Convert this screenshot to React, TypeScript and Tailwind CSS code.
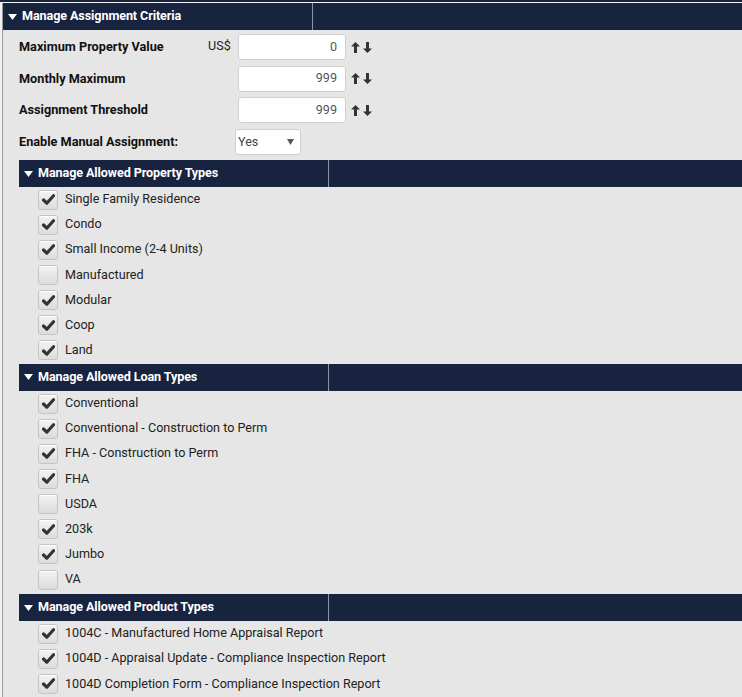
import React from "react";

const NAVY = "bg-[#18233f]";

function Tri() {
  return (
    <svg width="9" height="6" viewBox="0 0 9 6" className="mr-[5px] shrink-0">
      <polygon points="0,0 9,0 4.5,6" fill="#ffffff" />
    </svg>
  );
}

function Header({ title, first }: { title: string; first: number }) {
  return (
    <div className={`flex h-[27px] ${NAVY}`}>
      <div
        className="flex items-center border-r border-[#8d93a3] pl-[5px]"
        style={{ width: first }}
      >
        <Tri />
        <span className="text-[12.6px] font-bold text-white tracking-[-0.1px]">{title}</span>
      </div>
      <div className="flex-1" />
    </div>
  );
}

function Arrows() {
  return (
    <div className="flex items-center gap-[3px] ml-[5px]">
      <svg width="9" height="11" viewBox="0 0 9 11">
        <path d="M4.5 0 L9 4.5 L6 4.5 L6 11 L3 11 L3 4.5 L0 4.5 Z" fill="#333" />
      </svg>
      <svg width="9" height="11" viewBox="0 0 9 11">
        <path d="M4.5 11 L9 6.5 L6 6.5 L6 0 L3 0 L3 6.5 L0 6.5 Z" fill="#333" />
      </svg>
    </div>
  );
}

function NumInput({ value }: { value: string }) {
  return (
    <div className="w-[108px] h-[26px] bg-white border border-[#cfcfcf] rounded-[3px] flex items-center justify-end pr-[8px] text-[12.6px] text-[#555]">
      {value}
    </div>
  );
}

function Check({ checked }: { checked: boolean }) {
  return (
    <div className="w-[20px] h-[20px] rounded-[3px] border border-[#c4c4c4] bg-gradient-to-b from-[#f3f3f3] to-[#dcdcdc] flex items-center justify-center shadow-[inset_0_1px_0_#fff]">
      {checked && (
        <svg width="13" height="11" viewBox="0 0 13 11">
          <path d="M1.5 6 L4.8 9.2 L11.5 1.8" stroke="#333" strokeWidth="3.2" fill="none" strokeLinecap="round" strokeLinejoin="round" />
        </svg>
      )}
    </div>
  );
}

function Item({ label, checked }: { label: string; checked: boolean }) {
  return (
    <div className="flex items-center h-[25.15px] pl-[19px]">
      <Check checked={checked} />
      <span className="ml-[7px] text-[12.6px] text-[#222]">{label}</span>
    </div>
  );
}

const property: [string, boolean][] = [
  ["Single Family Residence", true],
  ["Condo", true],
  ["Small Income (2-4 Units)", true],
  ["Manufactured", false],
  ["Modular", true],
  ["Coop", true],
  ["Land", true],
];
const loan: [string, boolean][] = [
  ["Conventional", true],
  ["Conventional - Construction to Perm", true],
  ["FHA - Construction to Perm", true],
  ["FHA", true],
  ["USDA", false],
  ["203k", true],
  ["Jumbo", true],
  ["VA", false],
];
const product: [string, boolean][] = [
  ["1004C - Manufactured Home Appraisal Report", true],
  ["1004D - Appraisal Update - Compliance Inspection Report", true],
  ["1004D Completion Form - Compliance Inspection Report", true],
];

export default function App() {
  return (
    <div
      className="w-[742px] h-[697px] overflow-hidden bg-[#e6e6e6]"
      style={{ fontFamily: "Roboto, 'Liberation Sans', sans-serif" }}
    >
      <div className={`h-[2px] ${NAVY}`} />
      <div className="h-px bg-[#f4f4f4]" />
      <div className="flex">
        <div className="w-[2px] bg-[#f2f2f2]" />
        <div className="flex-1 border-l border-[#9a9a9a] min-h-[700px]">
          <Header title="Manage Assignment Criteria" first={310} />
          <div className="pl-[16px] pt-[4px]">
            {[
              ["Maximum Property Value", "0", true],
              ["Monthly Maximum", "999", false],
              ["Assignment Threshold", "999", false],
            ].map(([label, val, cur], i) => (
              <div key={i} className={`flex items-center h-[26px] ${i > 0 ? "mt-[5.5px]" : ""}`}>
                <span className="w-[189px] text-[12.7px] font-bold text-[#111]">{label}</span>
                <span className="w-[30px] text-[12.6px] text-[#222] self-start mt-[3px]">{cur ? "US$" : ""}</span>
                <NumInput value={val as string} />
                <Arrows />
              </div>
            ))}
            <div className="flex items-center h-[26px] mt-[6px]">
              <span className="w-[216px] text-[12.7px] font-bold text-[#111]">Enable Manual Assignment:</span>
              <div className="w-[66px] h-[26px] bg-white border border-[#cfcfcf] rounded-[3px] flex items-center justify-between pl-[2px] pr-[6px] text-[12.6px] text-[#444]">
                <span>Yes</span>
                <svg width="7" height="6" viewBox="0 0 7 6">
                  <polygon points="0,0 7,0 3.5,6" fill="#555" />
                </svg>
              </div>
            </div>
          </div>
          <div className="pl-[16px] mt-[5px]">
            <Header title="Manage Allowed Property Types" first={310} />
            {property.map(([l, c]) => (
              <Item key={l} label={l} checked={c} />
            ))}
            <div className="h-[1px]" />
            <Header title="Manage Allowed Loan Types" first={310} />
            {loan.map(([l, c]) => (
              <Item key={l} label={l} checked={c} />
            ))}
            <div className="h-[2px]" />
            <Header title="Manage Allowed Product Types" first={310} />
            {product.map(([l, c]) => (
              <Item key={l} label={l} checked={c} />
            ))}
          </div>
        </div>
      </div>
    </div>
  );
}
